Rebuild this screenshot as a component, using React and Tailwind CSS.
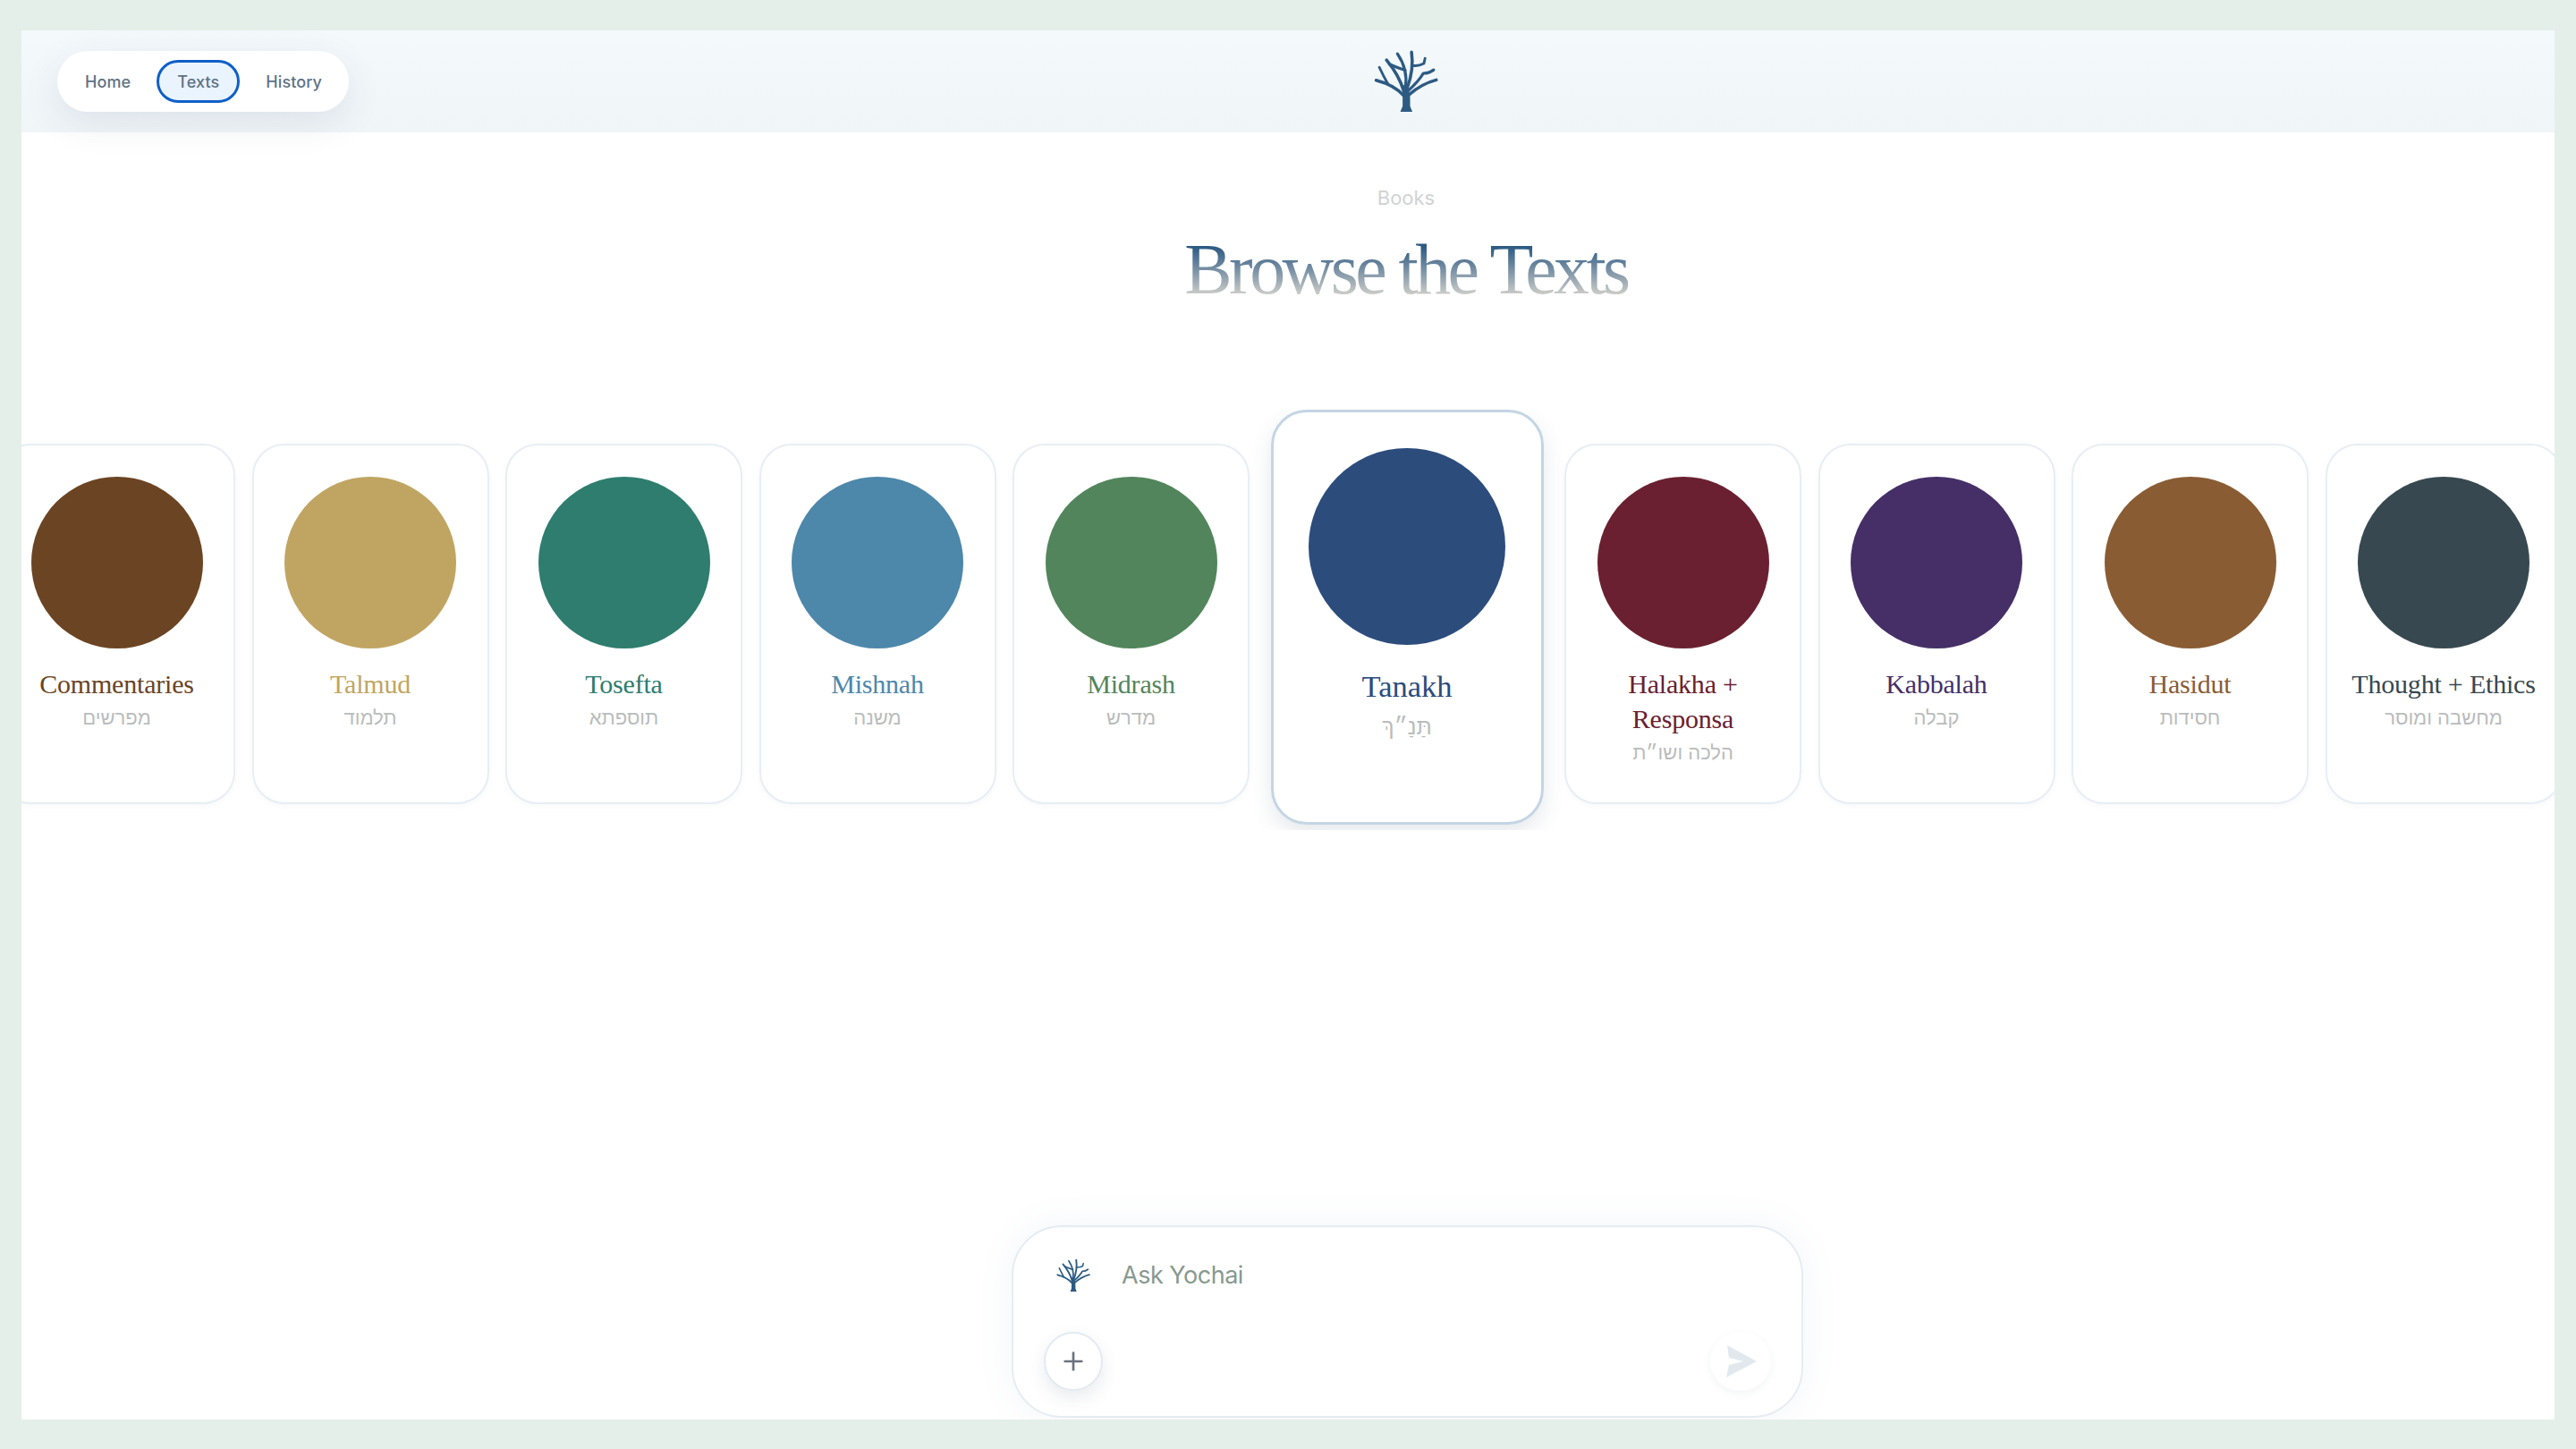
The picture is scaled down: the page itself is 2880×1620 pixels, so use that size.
import React from "react";
import { Plus } from "lucide-react";

const books = [
  { name: "Commentaries", he: "מפרשים", text: "text-[#6b4423]", dot: "bg-[#6b4423]" },
  { name: "Talmud", he: "תלמוד", text: "text-[#c0a562]", dot: "bg-[#c0a562]" },
  { name: "Tosefta", he: "תוספתא", text: "text-[#2e7d6e]", dot: "bg-[#2e7d6e]" },
  { name: "Mishnah", he: "משנה", text: "text-[#4d87aa]", dot: "bg-[#4d87aa]" },
  { name: "Midrash", he: "מדרש", text: "text-[#52855c]", dot: "bg-[#52855c]" },
  { name: "Tanakh", he: "תַּנַ״ךְ", text: "text-[#2c4c7c]", dot: "bg-[#2c4c7c]", active: true },
  { name: "Halakha + Responsa", he: "הלכה ושו״ת", text: "text-[#6a2030]", dot: "bg-[#6a2030]" },
  { name: "Kabbalah", he: "קבלה", text: "text-[#452f66]", dot: "bg-[#452f66]" },
  { name: "Hasidut", he: "חסידות", text: "text-[#8a5c33]", dot: "bg-[#8a5c33]" },
  { name: "Thought + Ethics", he: "מחשבה ומוסר", text: "text-[#374850]", dot: "bg-[#374850]" },
];

function Tree({ className }) {
  return (
    <svg viewBox="78 42 224 220" className={className} fill="none" stroke="#2c5a82" strokeLinecap="round" strokeLinejoin="round">
      <path d="M170 258 L212 258 L204 238 L204 205 L196 165 L176 165 L178 205 L178 238 Z" fill="#2c5a82" stroke="none" />
      <path strokeWidth="11" d="M180 200 Q150 165 86 148" />
      <path strokeWidth="9" d="M128 163 Q112 135 97 103" />
      <path strokeWidth="11" d="M182 185 Q165 130 122 78" />
      <path strokeWidth="10" d="M132 92 Q160 105 187 113" />
      <path strokeWidth="10" d="M188 172 Q197 110 160 56" />
      <path strokeWidth="11" d="M194 175 Q218 110 209 50" />
      <path strokeWidth="9" d="M214 97 Q232 100 252 90 L256 72" />
      <path strokeWidth="10" d="M197 185 Q235 150 250 124 Q270 124 286 112" />
      <path strokeWidth="11" d="M202 197 Q245 160 295 147" />
    </svg>
  );
}

function BookCard({ book }) {
  if (book.active) {
    return (
      <div className="w-[305px] h-[464px] shrink-0 mx-[5px] flex flex-col items-center pt-[40px] rounded-[40px] bg-white border-[3px] border-[#c4d5e4] shadow-[0_10px_24px_rgba(40,70,100,0.12)]">
        <div className={`w-[220px] h-[220px] shrink-0 rounded-full ${book.dot}`} />
        <div className={`mt-[23px] text-[34.5px] leading-[46px] ${book.text}`}>{book.name}</div>
        <div dir="rtl" className="mt-[3px] text-[25px] leading-[38px] text-[#b9bcbc] font-['Liberation_Sans',sans-serif]">{book.he}</div>
      </div>
    );
  }
  return (
    <div className="w-[265px] h-[403px] shrink-0 mt-[38px] flex flex-col items-center pt-[35px] rounded-[36px] bg-white border-2 border-[#e7eef5] shadow-[0_2px_6px_rgba(40,70,100,0.04)]">
      <div className={`w-[192px] h-[192px] shrink-0 rounded-full ${book.dot}`} />
      <div className={`mt-[20px] px-[10px] text-center text-[30px] leading-[39px] tracking-[-0.2px] whitespace-pre-line ${book.text}`}>
        {book.name === "Halakha + Responsa" ? "Halakha +\nResponsa" : book.name}
      </div>
      <div dir="rtl" className="mt-[2px] text-[22px] leading-[34px] text-[#b9bcbc] font-['Liberation_Sans',sans-serif]">{book.he}</div>
    </div>
  );
}

export default function App() {
  return (
    <div className="w-full h-[1620px] bg-[#e5efe9] pt-[34px] pb-[33px] px-[24px] font-['Inter',sans-serif]">
      <div className="relative w-full h-full bg-white overflow-hidden flex flex-col">
        {/* Top bar */}
        <header className="h-[114px] shrink-0 flex items-center justify-center pl-[264px] bg-gradient-to-b from-[#f4f9fc] to-[#f0f5f8]">
          <Tree className="w-[72px] h-[72px]" />
        </header>

        {/* Floating nav */}
        <nav className="absolute left-[40px] top-[23px] h-[68px] flex items-center gap-[7px] pl-[9px] pr-[8px] rounded-full bg-white shadow-[0_12px_40px_rgba(40,60,90,0.10)] text-[18px] tracking-[0.1px] font-medium text-[#5f7285]">
          <button className="h-[48px] px-[22px] rounded-full">Home</button>
          <button className="h-[48px] px-[20px] rounded-full bg-[#eaf4fe] border-[3px] border-[#0f5fc8]">Texts</button>
          <button className="h-[48px] px-[22px] rounded-full">History</button>
        </nav>

        {/* Heading */}
        <div className="pl-[264px] flex flex-col items-center shrink-0 pt-[58px]">
          <div className="text-[22px] leading-[30px] text-[#d0d3d3]">Books</div>
          <h1 className="mt-[20px] text-[80px] leading-[90px] tracking-[-3.6px] font-['Liberation_Serif',serif] text-transparent bg-clip-text bg-gradient-to-b from-[#2c5a82] from-[22%] to-[#c8cac6] to-[80%]">
            Browse the Texts
          </h1>
        </div>

        {/* Book row */}
        <div className="mt-[112px] h-[470px] shrink-0 overflow-hidden flex items-start gap-[18.5px] ml-[-26px] font-['Liberation_Serif',serif]">
          {books.map((book) => (
            <BookCard key={book.name} book={book} />
          ))}
        </div>

        {/* Ask box */}
        <div className="mt-auto mb-[2px] ml-[1107px] w-[885px] h-[215px] shrink-0 rounded-[56px] bg-white border-2 border-[#e5ecf3] px-[34px] pt-[36px] shadow-[0_0_40px_rgba(90,130,190,0.08)]">
          <div className="h-[36px] flex items-center pl-[14px] gap-[35px]">
            <Tree className="w-[38px] h-[38px]" />
            <span className="text-[27px] tracking-[-0.5px] text-[#87998f]">Ask Yochai</span>
          </div>
          <div className="mt-[45px] flex items-center justify-between">
            <button className="w-[66px] h-[66px] rounded-full bg-white border-2 border-[#e3eaf2] flex items-center justify-center shadow-[0_8px_20px_rgba(40,60,90,0.10)]">
              <Plus size={32} strokeWidth={2} color="#6b7280" />
            </button>
            <button className="w-[68px] h-[66px] rounded-full bg-white flex items-center justify-center shadow-[0_3px_10px_rgba(40,60,90,0.06)]">
              <svg viewBox="0 0 36 36" className="w-[36px] h-[36px]" fill="#e2e9ee">
                <path d="M3 0 L36 18 L2 36 L5 22 L21 18 L5 14 Z" />
              </svg>
            </button>
          </div>
        </div>
      </div>
    </div>
  );
}
